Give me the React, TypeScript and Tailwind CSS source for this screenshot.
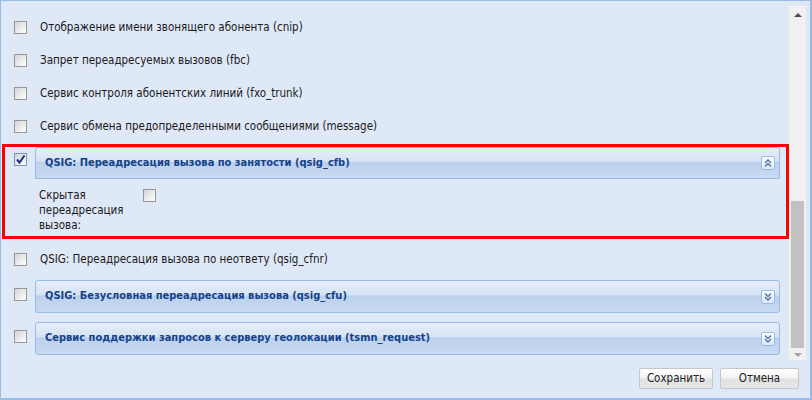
import React from "react";

function Box({ checked = false }: { checked?: boolean }) {
  return (
    <span
      className={`flex h-[13px] w-[13px] shrink-0 items-center justify-center border bg-gradient-to-br from-[#d4d4d4] to-white ${
        checked ? "border-[#7d93bd]" : "border-[#969696]"
      }`}
    >
      {checked && (
        <svg width="11" height="11" viewBox="0 0 11 11">
          <path d="M2 5.5 L4.5 8.5 L9.5 1.5" stroke="#18318e" strokeWidth="2" fill="none" />
        </svg>
      )}
    </span>
  );
}

function Toggle({ open }: { open: boolean }) {
  return (
    <span className="flex h-[14px] w-[14px] items-center justify-center rounded-[2px] border border-[#99bbe8] bg-gradient-to-b from-white to-[#dbe7f7]">
      <svg width="10" height="10" viewBox="0 0 10 10">
        {open ? (
          <g stroke="#4f73ab" strokeWidth="1.4" fill="none">
            <path d="M2 5 L5 2 L8 5" />
            <path d="M2 8.5 L5 5.5 L8 8.5" />
          </g>
        ) : (
          <g stroke="#4f73ab" strokeWidth="1.4" fill="none">
            <path d="M2 1.5 L5 4.5 L8 1.5" />
            <path d="M2 5 L5 8 L8 5" />
          </g>
        )}
      </svg>
    </span>
  );
}

function Legend({ title, open }: { title: string; open: boolean }) {
  return (
    <div
      className={`flex items-center justify-between border border-[#99bbe8] bg-[linear-gradient(to_bottom,#e6eef9_0%,#d6e3f4_44%,#b7cdea_49%,#bdd2ed_54%,#c8daf1_100%)] pl-[9px] pr-[4px] ${
        open ? "h-[32px] rounded-t-[3px]" : "h-[33px] rounded-[3px]"
      }`}
    >
      <span className="text-[11px] font-bold text-[#15428b]">{title}</span>
      <Toggle open={open} />
    </div>
  );
}

function Row({ label }: { label: string }) {
  return (
    <div className="flex h-[33px] items-center">
      <div className="w-[39px] pl-[13px]">
        <Box />
      </div>
      <span className="text-[11.5px] text-[#1a1a1a]">{label}</span>
    </div>
  );
}

function Closed({ title }: { title: string }) {
  return (
    <div className="flex">
      <div className="w-[34px] pl-[13px] pt-[8px]">
        <Box />
      </div>
      <div className="mr-[9px] flex-1">
        <Legend title={title} open={false} />
      </div>
    </div>
  );
}

export default function App() {
  return (
    <div className="flex h-[400px] w-[812px] flex-col border border-b-2 border-r-2 border-[#99bbe8] bg-[#dfe8f6] font-['DejaVu_Sans_Condensed','DejaVu_Sans',sans-serif]">
      <div className="flex h-[359px] pt-[5px]">
        <div className="flex-1 pt-[5px]">
          <Row label="Отображение имени звонящего абонента (cnip)" />
          <Row label="Запрет переадресуемых вызовов (fbc)" />
          <Row label="Сервис контроля абонентских линий (fxo_trunk)" />
          <Row label="Сервис обмена предопределенными сообщениями (message)" />

          <div className="ml-px mt-px border-[3px] border-[#ff0000]">
            <div className="flex">
              <div className="w-[30px] pl-[9px] pt-[6px]">
                <Box checked />
              </div>
              <div className="mr-[6px] flex-1">
                <Legend title="QSIG: Переадресация вызова по занятости (qsig_cfb)" open />
                <div className="flex pb-[3px] pl-[4px] pt-[9px]">
                  <span className="w-[104px] text-[11.5px] leading-[15px] text-[#1a1a1a]">
                    Скрытая переадресация вызова:
                  </span>
                  <div className="pt-[1px]">
                    <Box />
                  </div>
                </div>
              </div>
            </div>
          </div>

          <div className="mt-[4px]">
            <Row label="QSIG: Переадресация вызова по неответу (qsig_cfnr)" />
          </div>
          <div className="mt-[4px] flex flex-col gap-[9px]">
            <Closed title="QSIG: Безусловная переадресация вызова (qsig_cfu)" />
            <Closed title="Сервис поддержки запросов к серверу геолокации (tsmn_request)" />
          </div>
        </div>

        <div className="mr-[4px] flex w-[17px] flex-col bg-[#f0f0f0]">
          <div className="flex h-[17px] items-center justify-center">
            <span className="h-0 w-0 border-x-[4px] border-b-[4px] border-x-transparent border-b-[#4d4d4d]" />
          </div>
          <div className="flex flex-1 flex-col px-[2px]">
            <div className="h-[178px]" />
            <div className="h-[147px] bg-[#c1c1c1]" />
          </div>
          <div className="flex h-[12px] justify-center pt-[5px]">
            <span className="h-0 w-0 border-x-[4px] border-t-[4px] border-x-transparent border-t-[#a3a3a3]" />
          </div>
        </div>
      </div>

      <div className="mt-[8px] flex justify-end gap-[7px] pr-[11px]">
        <button className="h-[21px] w-[74px] rounded-[2px] border border-[#c6c6c6] bg-[linear-gradient(to_bottom,#ffffff_0%,#f3f3f3_48%,#e2e2e2_52%,#e6e6e6_100%)] text-[11.5px] text-[#222]">
          Сохранить
        </button>
        <button className="h-[21px] w-[79px] rounded-[2px] border border-[#c6c6c6] bg-[linear-gradient(to_bottom,#ffffff_0%,#f3f3f3_48%,#e2e2e2_52%,#e6e6e6_100%)] text-[11.5px] text-[#222]">
          Отмена
        </button>
      </div>
    </div>
  );
}
